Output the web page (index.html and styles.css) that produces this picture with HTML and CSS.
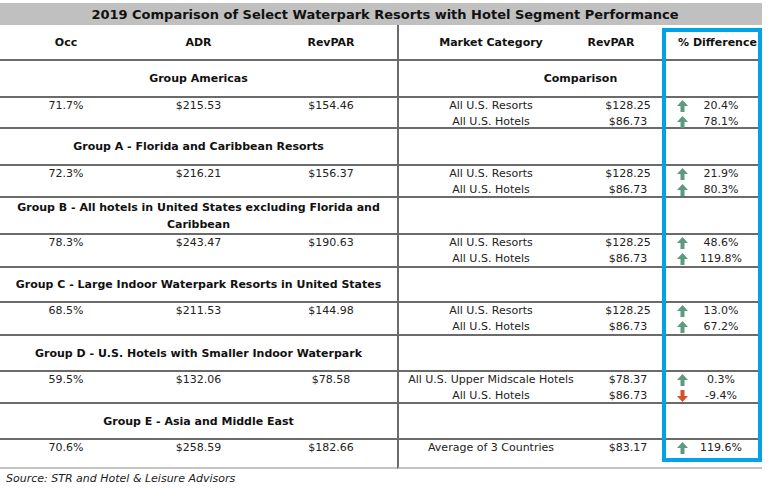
FILE: index.html
```html
<!DOCTYPE html>
<html>
<head>
<meta charset="utf-8">
<link rel="stylesheet" href="styles.css">
</head>
<body>
<div class="sheet">
  <div class="grid">
    <div class="title">2019 Comparison of Select Waterpark Resorts with Hotel Segment Performance</div>

    <div class="c hd">Occ</div>
    <div class="c hd">ADR</div>
    <div class="c hd">RevPAR</div>
    <div class="c hd sep">Market Category</div>
    <div class="c hd rp">RevPAR</div>
    <div class="c hd">% Difference</div>

    <div class="c grp left">Group Americas</div>
    <div class="c grp right sep">Comparison</div>
    <div class="c dat">71.7%</div>
    <div class="c dat">$215.53</div>
    <div class="c dat">$154.46</div>
    <div class="c dat sep"><span>All U.S. Resorts</span><span>All U.S. Hotels</span></div>
    <div class="c dat"><span>$128.25</span><span>$86.73</span></div>
    <div class="c dat pct">
      <div class="pl"><svg class="up" viewBox="0 0 11 12"><path d="M5.5 0L11 6H7.5V12H3.5V6H0Z"/></svg><span>20.4%</span></div>
      <div class="pl"><svg class="up" viewBox="0 0 11 12"><path d="M5.5 0L11 6H7.5V12H3.5V6H0Z"/></svg><span>78.1%</span></div>
    </div>

    <div class="c grp left">Group A - Florida and Caribbean Resorts</div>
    <div class="c grp right sep"></div>
    <div class="c dat">72.3%</div>
    <div class="c dat">$216.21</div>
    <div class="c dat">$156.37</div>
    <div class="c dat sep"><span>All U.S. Resorts</span><span>All U.S. Hotels</span></div>
    <div class="c dat"><span>$128.25</span><span>$86.73</span></div>
    <div class="c dat pct">
      <div class="pl"><svg class="up" viewBox="0 0 11 12"><path d="M5.5 0L11 6H7.5V12H3.5V6H0Z"/></svg><span>21.9%</span></div>
      <div class="pl"><svg class="up" viewBox="0 0 11 12"><path d="M5.5 0L11 6H7.5V12H3.5V6H0Z"/></svg><span>80.3%</span></div>
    </div>

    <div class="c grp left">Group B - All hotels in United States excluding Florida and Caribbean</div>
    <div class="c grp right sep"></div>
    <div class="c dat">78.3%</div>
    <div class="c dat">$243.47</div>
    <div class="c dat">$190.63</div>
    <div class="c dat sep"><span>All U.S. Resorts</span><span>All U.S. Hotels</span></div>
    <div class="c dat"><span>$128.25</span><span>$86.73</span></div>
    <div class="c dat pct">
      <div class="pl"><svg class="up" viewBox="0 0 11 12"><path d="M5.5 0L11 6H7.5V12H3.5V6H0Z"/></svg><span>48.6%</span></div>
      <div class="pl"><svg class="up" viewBox="0 0 11 12"><path d="M5.5 0L11 6H7.5V12H3.5V6H0Z"/></svg><span>119.8%</span></div>
    </div>

    <div class="c grp left">Group C - Large Indoor Waterpark Resorts in United States</div>
    <div class="c grp right sep"></div>
    <div class="c dat">68.5%</div>
    <div class="c dat">$211.53</div>
    <div class="c dat">$144.98</div>
    <div class="c dat sep"><span>All U.S. Resorts</span><span>All U.S. Hotels</span></div>
    <div class="c dat"><span>$128.25</span><span>$86.73</span></div>
    <div class="c dat pct">
      <div class="pl"><svg class="up" viewBox="0 0 11 12"><path d="M5.5 0L11 6H7.5V12H3.5V6H0Z"/></svg><span>13.0%</span></div>
      <div class="pl"><svg class="up" viewBox="0 0 11 12"><path d="M5.5 0L11 6H7.5V12H3.5V6H0Z"/></svg><span>67.2%</span></div>
    </div>

    <div class="c grp left">Group D - U.S. Hotels with Smaller Indoor Waterpark</div>
    <div class="c grp right sep"></div>
    <div class="c dat">59.5%</div>
    <div class="c dat">$132.06</div>
    <div class="c dat">$78.58</div>
    <div class="c dat sep"><span>All U.S. Upper Midscale Hotels</span><span>All U.S. Hotels</span></div>
    <div class="c dat"><span>$78.37</span><span>$86.73</span></div>
    <div class="c dat pct">
      <div class="pl"><svg class="up" viewBox="0 0 11 12"><path d="M5.5 0L11 6H7.5V12H3.5V6H0Z"/></svg><span>0.3%</span></div>
      <div class="pl"><svg class="down" viewBox="0 0 11 12"><path d="M5.5 12L11 6H7.5V0H3.5V6H0Z"/></svg><span>-9.4%</span></div>
    </div>

    <div class="c grp left">Group E - Asia and Middle East</div>
    <div class="c grp right sep"></div>
    <div class="c dat last">70.6%</div>
    <div class="c dat last">$258.59</div>
    <div class="c dat last">$182.66</div>
    <div class="c dat last sep"><span>Average of 3 Countries</span></div>
    <div class="c dat last"><span>$83.17</span></div>
    <div class="c dat last pct">
      <div class="pl"><svg class="up" viewBox="0 0 11 12"><path d="M5.5 0L11 6H7.5V12H3.5V6H0Z"/></svg><span>119.6%</span></div>
    </div>
  </div>
  <div class="source">Source: STR and Hotel &amp; Leisure Advisors</div>
  <div class="highlight"></div>
</div>
</body>
</html>
```

FILE: styles.css
```css
html, body {
  margin: 0;
  padding: 0;
  background: #ffffff;
}

body {
  font-family: "DejaVu Sans", Verdana, sans-serif;
  font-size: 11px;
  color: #222222;
}

.sheet {
  position: relative;
  width: 768px;
  height: 488px;
  padding-top: 3px;
  box-sizing: border-box;
}

.grid {
  display: grid;
  width: 762px;
  grid-template-columns: 132px 133px 132px 186px 90px 89px;
  grid-template-rows: 22px 36px 37px 31px 37px 32px 37px 33px 35px 33px 36px 32px 36px 29px;
}

.title {
  grid-column: 1 / -1;
  background: #c0c0c0;
  font-weight: bold;
  font-size: 13px;
  color: #111111;
  display: flex;
  align-items: center;
  justify-content: center;
  padding-left: 8px;
}

.c {
  box-sizing: border-box;
  border-bottom: 2px solid #6b6b6b;
  display: flex;
  text-align: center;
}

.c.last {
  border-bottom-color: #c4c4c4;
}

.sep {
  border-left: 2px solid #6b6b6b;
}

.hd, .grp {
  font-weight: bold;
  color: #111111;
  align-items: center;
  justify-content: center;
  line-height: 17px;
}

.hd.rp {
  padding-right: 34px;
}

.grp.left {
  grid-column: 1 / 4;
  padding: 0 6px;
}

.grp.right {
  grid-column: 4 / 7;
}

.dat {
  flex-direction: column;
  align-items: center;
  justify-content: flex-start;
  line-height: 16px;
}

.dat.pct {
  align-items: stretch;
  padding-left: 4px;
}

.pl {
  display: grid;
  grid-template-columns: 11px 1fr 8px;
  align-items: center;
  height: 16px;
}

.pl span {
  text-align: center;
}

.pl svg {
  width: 11px;
  height: 12px;
  display: block;
}

.up {
  fill: #5c9b7f;
}

.down {
  fill: #d5532b;
}

.source {
  font-style: italic;
  padding-left: 6px;
  line-height: 19px;
  color: #222222;
}

.highlight {
  position: absolute;
  left: 662px;
  top: 28px;
  width: 100px;
  height: 434px;
  box-sizing: border-box;
  border: 4px solid #00a3e6;
}
```
